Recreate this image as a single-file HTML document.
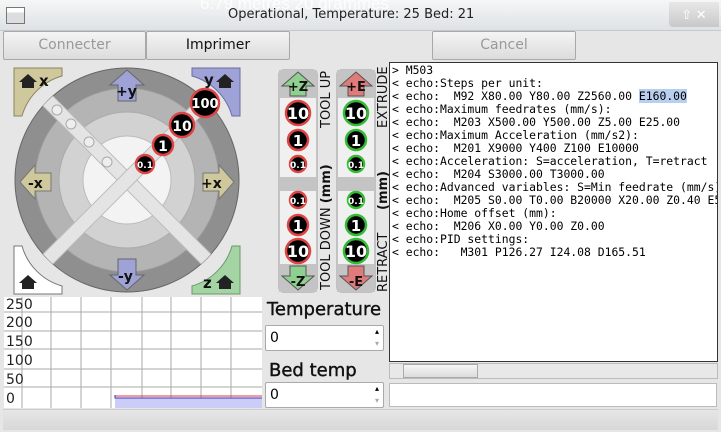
<!DOCTYPE html>
<html><head><meta charset="utf-8"><style>
body{margin:0;width:721px;height:432px;background:#e6e6e6;font-family:"Liberation Sans","DejaVu Sans",sans-serif;position:relative;overflow:hidden}
.abs{position:absolute}
.btn{position:absolute;border:1px solid #a8a8a8;border-radius:2px;background:linear-gradient(#f4f4f4,#dcdcdc);font-size:14px;text-align:center;line-height:27px;font-family:"DejaVu Sans",sans-serif}
pre{margin:0;font-family:"DejaVu Sans Mono",monospace;font-size:11.4px;line-height:13px}
.spin{position:absolute;background:#fff;border:1px solid #aaa;border-radius:2px;font-family:"DejaVu Sans",sans-serif;font-size:14px;line-height:24px;padding-left:4px}
.lbl{position:absolute;font-family:"DejaVu Sans",sans-serif;font-size:18px;color:#111;-webkit-text-stroke:0.4px #111}
</style></head><body>
<div class="abs" style="left:0;top:0;width:721px;height:30px;background:linear-gradient(#f6f6f6,#dde2e6);border-bottom:1px solid #c8c8c8"></div>
<div class="abs" style="left:6px;top:7px;width:17px;height:15px;border:1px solid #777;background:linear-gradient(#fff 30%,#ddd 30%)"></div>
<div class="abs" style="left:200px;top:-6px;font-size:17px;color:#fff;opacity:.9">6.79 metres 20 grammes</div>
<div class="abs" style="left:228px;top:7px;font-size:13px;font-family:'DejaVu Sans',sans-serif;color:#222">Operational, Temperature: 25 Bed: 21</div>
<div class="abs" style="left:669px;top:2px;width:50px;height:25px;background:linear-gradient(#e8e8e8,#c8c8c8);border-radius:0 0 0 4px;color:#fff;font-size:13px;line-height:25px;text-align:center">&#8679; &#10005;</div>
<div class="btn" style="left:3px;top:31px;width:141px;height:27px;color:#999">Connecter</div>
<div class="btn" style="left:146px;top:31px;width:142px;height:27px;color:#111">Imprimer</div>
<div class="btn" style="left:432px;top:31px;width:142px;height:27px;color:#999">Cancel</div>

<svg class="abs" style="left:0;top:60px" width="270" height="240" viewBox="0 60 270 240">
<defs><clipPath id="c"><circle cx="127" cy="180" r="112"/></clipPath></defs>
<circle cx="127" cy="180" r="112" fill="#8f8f8f" stroke="#666"/>
<circle cx="127" cy="180" r="92" fill="#b4b4b4" stroke="#999"/>
<circle cx="127" cy="180" r="68" fill="#d2d2d2" stroke="#aaa"/>
<circle cx="127" cy="180" r="44" fill="#f3f3f3" stroke="#bbb"/>
<g clip-path="url(#c)">
<rect x="7" y="173" width="240" height="14" fill="#e4e4e4" stroke="#bbb" transform="rotate(45 127 180)"/>
<rect x="7" y="173" width="240" height="14" fill="#e4e4e4" stroke="#bbb" transform="rotate(-45 127 180)"/>
</g>
<g fill="#eee" stroke="#aaa"><circle cx="57" cy="110" r="5"/><circle cx="71" cy="124" r="5"/><circle cx="89" cy="142" r="5"/><circle cx="107" cy="162" r="5"/></g>
<path d="M14 68H62V76A58 58 0 0 0 22 116H14Z" fill="#cfc89c" stroke="#8a855e"/>
<path d="M240 68H192V76A58 58 0 0 1 232 116H240Z" fill="#9ea2d6" stroke="#6a6e9e"/>
<path d="M14 294H62V286A58 58 0 0 1 22 246H14Z" fill="#fff" stroke="#777"/>
<path d="M240 294H192V286A58 58 0 0 0 232 246H240Z" fill="#a4d4a4" stroke="#6a9a6a"/>
<g fill="#222"><path d="M19 82l9-8 9 8h-3v6h-12v-6z"/><path d="M216 82l9-8 9 8h-3v6h-12v-6z"/><path d="M19 283l9-8 9 8h-3v6h-12v-6z"/><path d="M216 283l9-8 9 8h-3v6h-12v-6z"/></g>
<g font-family="DejaVu Sans,sans-serif" font-weight="bold" font-size="15" fill="#111">
<text x="39" y="86">x</text><text x="204" y="85">y</text><text x="203" y="288">z</text></g>
<path d="M127 70l17 15h-8v16h-18v-16h-8z" fill="#9ea2d6" stroke="#666"/>
<path d="M127 290l17-15h-8v-16h-18v16h-8z" fill="#9ea2d6" stroke="#666"/>
<path d="M20 182l15-17v8h16v18h-16v8z" fill="#cfc89c" stroke="#777"/>
<path d="M234 182l-15-17v8h-16v18h16v8z" fill="#cfc89c" stroke="#777"/>
<g font-family="DejaVu Sans,sans-serif" font-weight="bold" font-size="14" fill="#111">
<text x="116" y="96">+y</text><text x="118" y="281">-y</text><text x="28" y="188">-x</text><text x="201" y="188">+x</text></g>
<g stroke="#d44" stroke-width="2.5" fill="#000"><circle cx="205" cy="103" r="14"/><circle cx="182" cy="125" r="12"/><circle cx="163" cy="145" r="10"/><circle cx="145" cy="164" r="9"/></g>
<g font-family="DejaVu Sans,sans-serif" font-weight="bold" fill="#fff" text-anchor="middle">
<text x="205" y="108" font-size="13">100</text><text x="182" y="131" font-size="14">10</text><text x="163" y="151" font-size="14">1</text><text x="145" y="168" font-size="9">0.1</text></g>
</svg>

<svg class="abs" style="left:270px;top:60px" width="120" height="240" viewBox="0 0 120 240">
<rect x="9" y="10" width="38" height="222" rx="4" fill="#f0f0f0" stroke="#999"/>
<rect x="67" y="10" width="38" height="222" rx="4" fill="#f0f0f0" stroke="#999"/>
<g fill="#c4c4c4"><rect x="9" y="10" width="38" height="28"/><rect x="67" y="10" width="38" height="28"/><rect x="9" y="204" width="38" height="28"/><rect x="67" y="204" width="38" height="28"/>
<rect x="9" y="117" width="38" height="14"/><rect x="67" y="117" width="38" height="14"/></g>
<path d="M28 12l16 14h-8v10h-16v-10h-8z" fill="#8fcf8f" stroke="#555"/>
<path d="M28 230l16-14h-8v-10h-16v10h-8z" fill="#8fcf8f" stroke="#555"/>
<path d="M86 12l16 14h-8v10h-16v-10h-8z" fill="#e07b7b" stroke="#555"/>
<path d="M86 230l16-14h-8v-10h-16v10h-8z" fill="#e07b7b" stroke="#555"/>
<g font-family="DejaVu Sans,sans-serif" font-weight="bold" font-size="13" fill="#111" text-anchor="middle">
<text x="28" y="31">+Z</text><text x="28" y="226">-Z</text><text x="86" y="31">+E</text><text x="86" y="226">-E</text></g>
<g stroke="#d44" stroke-width="2.5" fill="#000"><circle cx="28" cy="53" r="12"/><circle cx="28" cy="80" r="10"/><circle cx="28" cy="104" r="8"/><circle cx="28" cy="140" r="8"/><circle cx="28" cy="165" r="10"/><circle cx="28" cy="191" r="12"/></g>
<g stroke="#3b3" stroke-width="2.5" fill="#000"><circle cx="86" cy="53" r="12"/><circle cx="86" cy="80" r="10"/><circle cx="86" cy="104" r="8"/><circle cx="86" cy="140" r="8"/><circle cx="86" cy="165" r="10"/><circle cx="86" cy="191" r="12"/></g>
<g font-family="DejaVu Sans,sans-serif" font-weight="bold" fill="#fff" text-anchor="middle">
<text x="28" y="59" font-size="16">10</text><text x="28" y="86" font-size="15">1</text><text x="28" y="108" font-size="9">0.1</text><text x="28" y="144" font-size="9">0.1</text><text x="28" y="171" font-size="15">1</text><text x="28" y="197" font-size="16">10</text>
<text x="86" y="59" font-size="16">10</text><text x="86" y="86" font-size="15">1</text><text x="86" y="108" font-size="9">0.1</text><text x="86" y="144" font-size="9">0.1</text><text x="86" y="171" font-size="15">1</text><text x="86" y="197" font-size="16">10</text></g>
<g font-family="DejaVu Sans,sans-serif" font-size="13" fill="#111">
<text transform="translate(60 68) rotate(-90)">TOOL UP</text>
<text transform="translate(60 230) rotate(-90)">TOOL DOWN <tspan font-weight="bold">(mm)</tspan></text>
<text transform="translate(117 68) rotate(-90)">EXTRUDE</text>
<text transform="translate(117 150) rotate(-90)" font-weight="bold">(mm)</text>
<text transform="translate(117 232) rotate(-90)">RETRACT</text></g>
</svg>

<div class="abs" style="left:389px;top:62px;width:327px;height:298px;background:#fff;border:1px solid #333;overflow:hidden"><pre style="padding:1px 0 0 2px">&gt; M503
&lt; echo:Steps per unit:
&lt; echo:  M92 X80.00 Y80.00 Z2560.00 <span style="background:#b8cff0">E160.00</span>
&lt; echo:Maximum feedrates (mm/s):
&lt; echo:  M203 X500.00 Y500.00 Z5.00 E25.00
&lt; echo:Maximum Acceleration (mm/s2):
&lt; echo:  M201 X9000 Y400 Z100 E10000
&lt; echo:Acceleration: S=acceleration, T=retract
&lt; echo:  M204 S3000.00 T3000.00
&lt; echo:Advanced variables: S=Min feedrate (mm/s)
&lt; echo:  M205 S0.00 T0.00 B20000 X20.00 Z0.40 E5
&lt; echo:Home offset (mm):
&lt; echo:  M206 X0.00 Y0.00 Z0.00
&lt; echo:PID settings:
&lt; echo:   M301 P126.27 I24.08 D165.51</pre></div>
<div class="abs" style="left:389px;top:363px;width:329px;height:16px;background:#e8e8e8;border:1px solid #bbb;box-sizing:border-box"></div>
<div class="abs" style="left:403px;top:364px;width:75px;height:14px;background:linear-gradient(#f6f6f6,#dcdcdc);border:1px solid #aaa;box-sizing:border-box"></div>
<div class="abs" style="left:389px;top:383px;width:328px;height:24px;background:#fff;border:1px solid #bbb;box-sizing:border-box"></div>

<svg class="abs" style="left:4px;top:297px" width="258" height="111">
<rect width="258" height="111" fill="#fff"/>
<g stroke="#aaa" stroke-width="1"><path d="M18 0V111M47 0V111M77 0V111M107 0V111M138 0V111M167 0V111M197 0V111M227 0V111M0 15H258M0 34H258M0 52H258M0 72H258M0 90H258"/></g>
<rect x="111" y="101" width="147" height="10" fill="#ccccf8"/>
<path d="M111 99H258" stroke="#e33"/><path d="M111 98V101H258" stroke="#33c" fill="none"/>
<g font-family="DejaVu Sans,sans-serif" font-size="14" fill="#222"><text x="2" y="12">250</text><text x="2" y="30">200</text><text x="2" y="49">150</text><text x="2" y="68">100</text><text x="2" y="87">50</text><text x="2" y="106">0</text></g>
</svg>
<div class="lbl" style="left:267px;top:299px">Temperature</div>
<div class="spin" style="left:265px;top:325px;width:113px;height:24px">0<span style="position:absolute;right:4px;top:-6px;font-size:8px">▴</span><span style="position:absolute;right:4px;top:6px;font-size:8px;color:#aaa">▾</span></div>
<div class="lbl" style="left:269px;top:360px">Bed temp</div>
<div class="spin" style="left:265px;top:382px;width:113px;height:24px">0<span style="position:absolute;right:4px;top:-6px;font-size:8px">▴</span><span style="position:absolute;right:4px;top:6px;font-size:8px;color:#aaa">▾</span></div>
<div class="abs" style="left:3px;top:409px;width:715px;height:20px;background:linear-gradient(#e6e6e6,#d8d8d8);border-top:1px solid #ccc"></div>
</body></html>
